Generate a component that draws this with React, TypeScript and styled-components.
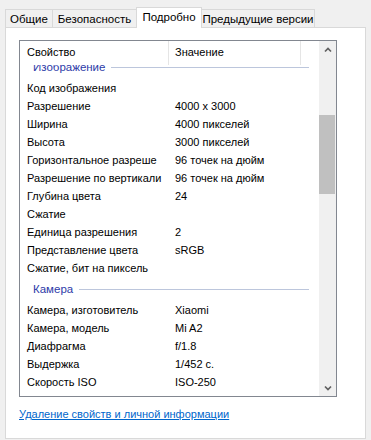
import React from 'react';
import styled, { createGlobalStyle } from 'styled-components';

const Global = createGlobalStyle`
  html, body {
    margin: 0;
    padding: 0;
    background: #f0f0f0;
  }
  body {
    font-family: "Liberation Sans", Arial, sans-serif;
    font-size: 11px;
    color: #000;
  }
`;

const Window = styled.div`
  width: 371px;
  height: 440px;
  background: #f0f0f0;
  overflow: hidden;
`;

const TabStrip = styled.div`
  display: flex;
  align-items: flex-end;
  height: 27px;
  padding-left: 5px;
  box-sizing: border-box;
  position: relative;
  z-index: 2;
`;

const Tab = styled.div<{ $w: number; $active?: boolean }>`
  width: ${({ $w }) => $w}px;
  height: ${({ $active }) => ($active ? 21 : 18)}px;
  margin-left: -1px;
  margin-bottom: ${({ $active }) => ($active ? -1 : 0)}px;
  box-sizing: border-box;
  border: 1px solid #d9d9d9;
  border-bottom: none;
  background: ${({ $active }) => ($active ? '#fff' : '#f0f0f0')};
  display: flex;
  align-items: center;
  justify-content: center;
  padding-bottom: ${({ $active }) => ($active ? 3 : 0)}px;
  white-space: nowrap;
  font-size: 11.5px;
  position: relative;
  z-index: ${({ $active }) => ($active ? 2 : 1)};

  &:first-child { margin-left: 0; }
`;

const Panel = styled.div`
  margin: 0 5px;
  height: 412px;
  box-sizing: border-box;
  background: #fff;
  border: 1px solid #d9d9d9;
  padding: 12px 0 0 13px;
  position: relative;
  z-index: 1;
`;

const ListBox = styled.div`
  width: 318px;
  height: 357px;
  box-sizing: border-box;
  border: 1px solid #828790;
  display: flex;
  background: #fff;
`;

const ListMain = styled.div`
  width: 299px;
  display: flex;
  flex-direction: column;
`;

const Header = styled.div`
  height: 24px;
  display: grid;
  grid-template-columns: 149px 132px 1fr;
  flex-shrink: 0;
  background: #fff;
  position: relative;
  z-index: 1;
`;

const HeadCell = styled.div<{ $pad: number; $last?: boolean }>`
  display: flex;
  align-items: center;
  padding-left: ${({ $pad }) => $pad}px;
  padding-bottom: 2px;
  border-right: ${({ $last }) => ($last ? 'none' : '1px solid #e5e5e5')};
  white-space: nowrap;
`;

const Body = styled.div`
  flex: 1;
  overflow: hidden;
`;

const Content = styled.div`
  margin-top: -10px;
`;

const Group = styled.div`
  height: 24px;
  display: flex;
  align-items: center;
  padding-left: 13px;
  padding-right: 10px;
  color: #2d3aa8;
  white-space: nowrap;
  font-size: 11.5px;
`;

const GroupLine = styled.div`
  flex: 1;
  height: 1px;
  margin-left: 6px;
  background: #bcc6dc;
`;

const Row = styled.div`
  height: 18px;
  display: grid;
  grid-template-columns: 149px 1fr;
  align-items: center;
  white-space: nowrap;
`;

const Prop = styled.div`
  padding-left: 7px;
  overflow: hidden;
`;

const Value = styled.div`
  padding-left: 6px;
  overflow: hidden;
`;

const ScrollBar = styled.div`
  width: 17px;
  background: #f0f0f0;
  display: flex;
  flex-direction: column;
`;

const Arrow = styled.div<{ $bottom?: boolean }>`
  height: 17px;
  display: flex;
  align-items: center;
  justify-content: center;
  margin-top: ${({ $bottom }) => ($bottom ? 'auto' : '0')};
`;

const Thumb = styled.div`
  margin-top: 57px;
  width: 16px;
  height: 79px;
  background: #c0c0c0;
`;

const Link = styled.a`
  display: inline-block;
  margin-top: 11px;
  color: #0066cc;
  text-decoration: underline;
  cursor: pointer;
`;

const Chevron = ({ down }: { down?: boolean }) => (
  <svg width="8" height="6" viewBox="0 0 8 6">
    <polyline
      points={down ? '1,1.5 4,4.5 7,1.5' : '1,4.5 4,1.5 7,4.5'}
      fill="none"
      stroke="#606060"
      strokeWidth="1.7"
    />
  </svg>
);

const imageRows: [string, string][] = [
  ['Код изображения', ''],
  ['Разрешение', '4000 x 3000'],
  ['Ширина', '4000 пикселей'],
  ['Высота', '3000 пикселей'],
  ['Горизонтальное разреше', '96 точек на дюйм'],
  ['Разрешение по вертикали', '96 точек на дюйм'],
  ['Глубина цвета', '24'],
  ['Сжатие', ''],
  ['Единица разрешения', '2'],
  ['Представление цвета', 'sRGB'],
  ['Сжатие, бит на пиксель', ''],
];

const cameraRows: [string, string][] = [
  ['Камера, изготовитель', 'Xiaomi'],
  ['Камера, модель', 'Mi A2'],
  ['Диафрагма', 'f/1.8'],
  ['Выдержка', '1/452 с.'],
  ['Скорость ISO', 'ISO-250'],
  ['Сдвиг экспозиции', '0 шаг'],
];

const tabs = [
  { label: 'Общие', w: 48 },
  { label: 'Безопасность', w: 85 },
  { label: 'Подробно', w: 66, active: true },
  { label: 'Предыдущие версии', w: 114 },
];

export default function App() {
  return (
    <Window>
      <Global />
      <TabStrip>
        {tabs.map((t) => (
          <Tab key={t.label} $w={t.w} $active={t.active}>
            {t.label}
          </Tab>
        ))}
      </TabStrip>
      <Panel>
        <ListBox>
          <ListMain>
            <Header>
              <HeadCell $pad={7}>Свойство</HeadCell>
              <HeadCell $pad={6}>Значение</HeadCell>
              <HeadCell $pad={0} $last />
            </Header>
            <Body>
              <Content>
                <Group>
                  Изображение
                  <GroupLine />
                </Group>
                {imageRows.map(([p, v]) => (
                  <Row key={p}>
                    <Prop>{p}</Prop>
                    <Value>{v}</Value>
                  </Row>
                ))}
                <Group>
                  Камера
                  <GroupLine />
                </Group>
                {cameraRows.map(([p, v]) => (
                  <Row key={p}>
                    <Prop>{p}</Prop>
                    <Value>{v}</Value>
                  </Row>
                ))}
              </Content>
            </Body>
          </ListMain>
          <ScrollBar>
            <Arrow>
              <Chevron />
            </Arrow>
            <Thumb />
            <Arrow $bottom>
              <Chevron down />
            </Arrow>
          </ScrollBar>
        </ListBox>
        <Link>Удаление свойств и личной информации</Link>
      </Panel>
    </Window>
  );
}
